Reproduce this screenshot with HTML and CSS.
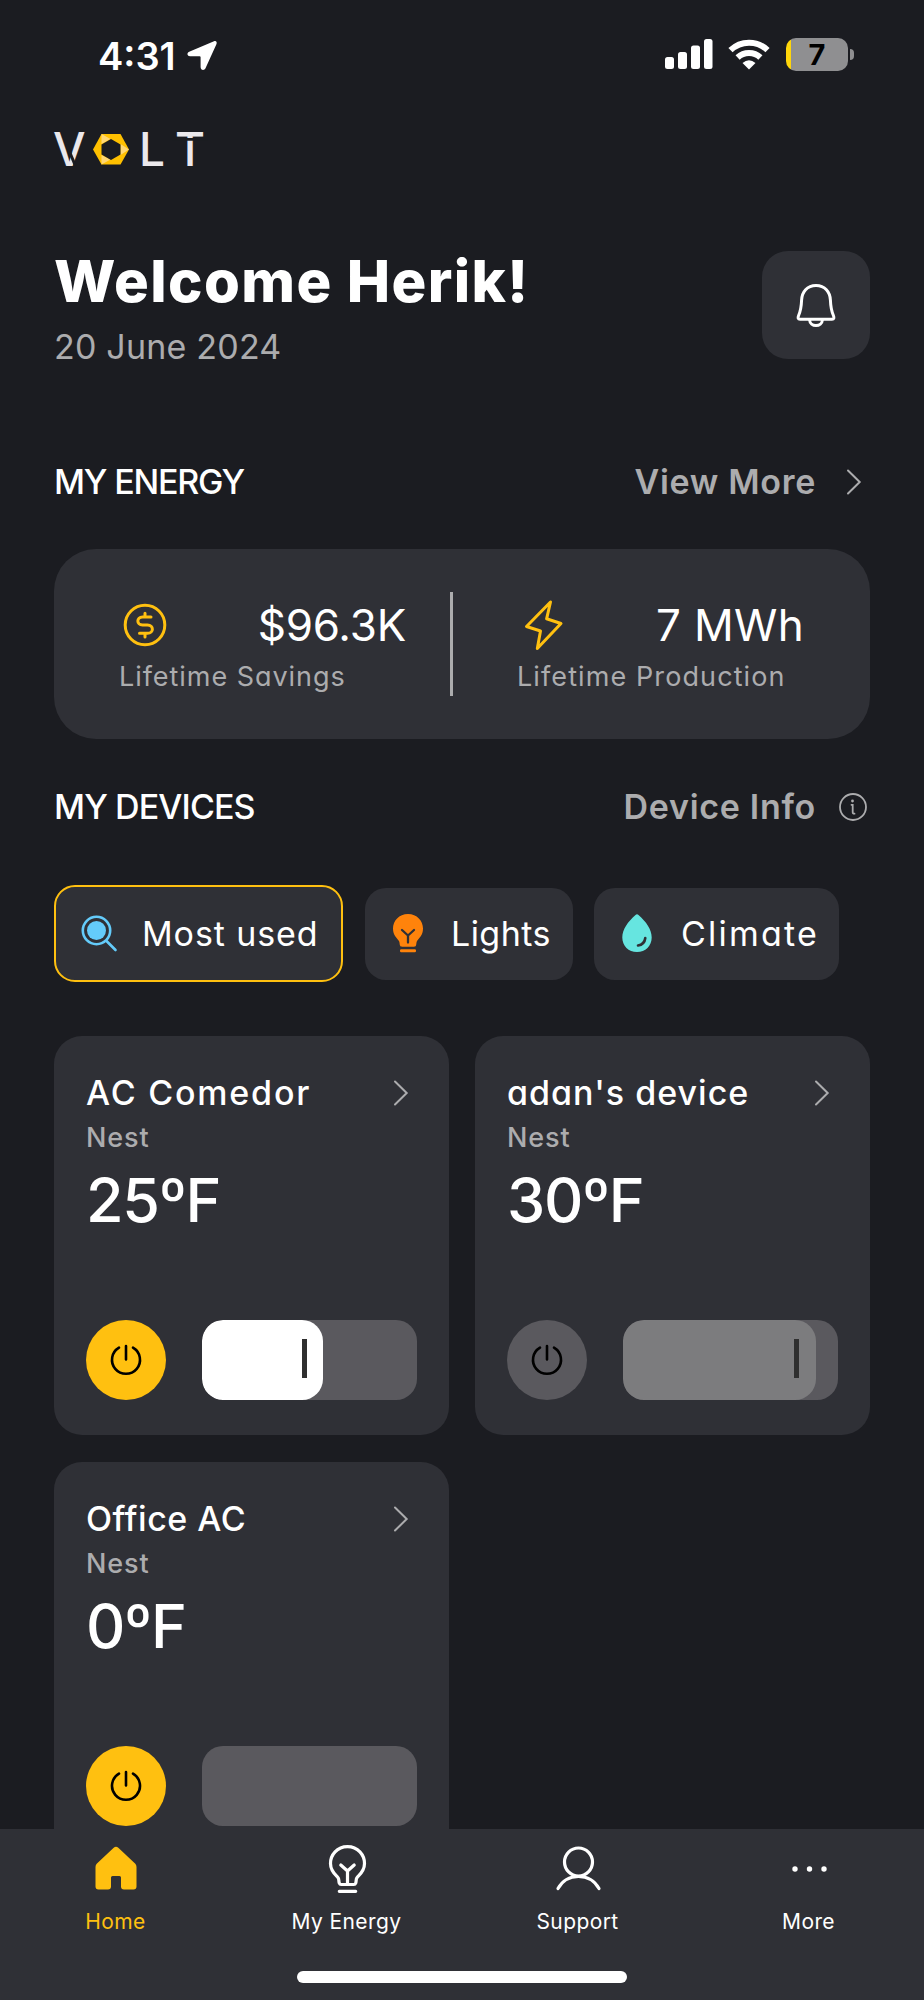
FILE: index.html
```html
<!DOCTYPE html>
<html lang="en">
<head>
<meta charset="utf-8">
<title>Volt</title>
<link rel="stylesheet" href="styles.css">
</head>
<body>
<div class="app">
  <header class="status">
    <div class="status-left">
      <span class="time">4:31</span>
      <svg class="location" viewBox="0 0 30 31"><path d="M27 1.200 2.200 11.800C-.6 13 .2 16.200 3 16.200h9.600q1 0 1 1v9.900c0 3.400 3.700 3.800 4.900 1.200L29.400 4.200C30.400 1.900 29 .4 27 1.200Z" fill="#fff"/></svg>
    </div>
    <div class="status-right">
      <svg class="signal" viewBox="0 0 48 31" fill="#fff"><rect x="0" y="18" width="9" height="12" rx="2.500"/><rect x="13" y="13" width="9" height="17" rx="2.500"/><rect x="26" y="6.500" width="9" height="23.500" rx="2.500"/><rect x="39" y="0" width="8.500" height="30" rx="2.500"/></svg>
      <svg class="wifi" viewBox="0 0 42 31"><g fill="none" stroke="#fff" stroke-width="6"><path d="M2.500 11.200a26.500 26.500 0 0 1 37 0"/><path d="M9.600 18.500a16.500 16.500 0 0 1 22.800 0"/></g><path d="M21 30.500 14.500 24q6.500-5.500 13 0Z" fill="#fff"/></svg>
      <div class="battery"><span class="battery-level">7</span></div>
      <span class="battery-cap"></span>
    </div>
  </header>

  <main class="content">
    <svg class="logo" viewBox="0 0 152 36">
      <g class="logo-text"><text x="-1" y="34">V</text><text x="85" y="34">L</text><text x="121" y="34">T</text></g>
      <path d="M12.500 12.500 21.500 34" stroke="#1b1c21" stroke-width="3"/>
      <path d="M118 7.400h36" stroke="#1b1c21" stroke-width="2.800"/>
      <path d="M47.500 2H66.500L75 17.500 66.500 32.500H47.500L39 17.500Z" fill="#ffc000"/>
      <path d="M47.500 2 56.500 7 47.500 12ZM75 17.500 66.500 23V12ZM47.500 32.500V23L56.500 27.500Z" fill="#ffd774"/>
      <path d="M57 7 66.500 12.500V22.500L57 28 47.500 22.500V12.500Z" fill="#1b1c21"/>
    </svg>

    <section class="welcome">
      <div>
        <h1 class="welcome-title">Welcome Herik!</h1>
        <p class="welcome-date">20 June 2024</p>
      </div>
      <div class="bell-button">
        <svg class="bell" viewBox="0 0 40 44" fill="none" stroke="#fff" stroke-width="3" stroke-linejoin="round"><path d="M20 2.500C11 2.500 6 9 5.600 17 5.300 25 5 27 2.600 32.500 1.600 35 2 36.300 4 36.300H36C38 36.300 38.400 35 37.400 32.500 35 27 34.700 25 34.400 17 34 9 29 2.500 20 2.500Z"/><path d="M13.500 36.500c.5 8 12.500 8 13 0"/></svg>
      </div>
    </section>

    <section class="section-head energy-head">
      <h2 class="section-title energy-title">MY ENERGY</h2>
      <a class="section-link"><span>View More</span><svg class="chevron" viewBox="0 0 14 26"><path d="M1 1.500 12.700 13 1 24.500"/></svg></a>
    </section>

    <section class="energy-card">
      <div class="metric">
        <div class="metric-row">
          <svg class="coin" viewBox="0 0 44 44" fill="none" stroke="#ffc010" stroke-width="3" stroke-linecap="round"><circle cx="22" cy="22" r="19.800"/><path d="M28 14H19.500C13.300 14 13.300 22 19.500 22H24.500C31 22 31 30.300 24.500 30.300H16.500M22 10.300V14M22 30.300V34"/></svg>
          <span class="metric-value savings-value">$96.3K</span>
        </div>
        <p class="metric-label">Lifetime Savings</p>
      </div>
      <div class="divider"></div>
      <div class="metric">
        <div class="metric-row">
          <svg class="bolt" viewBox="0 0 40 52" fill="none" stroke="#ffc010" stroke-width="3" stroke-linejoin="round"><path d="M27.500 3 3.500 27.500 17.500 32 14.300 49.500 38 24.500 23.600 19.800Z"/></svg>
          <span class="metric-value">7 MWh</span>
        </div>
        <p class="metric-label production-label">Lifetime Production</p>
      </div>
    </section>

    <section class="section-head devices-head">
      <h2 class="section-title devices-title">MY DEVICES</h2>
      <a class="section-link"><span>Device Info</span><svg class="info" viewBox="0 0 30 30" fill="none" stroke="#acacae" stroke-width="1.800" stroke-linecap="round"><circle cx="15" cy="15" r="13"/><path d="M13.500 12.800h1.200v7.400q0 1.500 1.800 1.500"/><circle cx="14.500" cy="9" r="1.400" fill="#acacae" stroke="none"/></svg></a>
    </section>

    <nav class="chips">
      <div class="chip most-used active">
        <svg class="chip-icon search" viewBox="0 0 36 38"><circle cx="15.500" cy="15.500" r="9.500" fill="#64cbfa"/><g fill="none" stroke="#64cbfa" stroke-width="2.600" stroke-linecap="round"><circle cx="15.500" cy="15.500" r="13.700"/><path d="M25.500 26 34.500 35"/></g></svg>
        <span>Most used</span>
      </div>
      <div class="chip lights">
        <svg class="chip-icon bulb" viewBox="0 0 30 39"><path d="M15 0C6 0 0 7 0 14.500c0 7 4 9.500 6 12.500.8 1.500.5 3.500 1 4.500.4.800 1 1.200 2 1.200h12c1 0 1.600-.4 2-1.200.5-1 .2-3 1-4.500 2-3 6-5.500 6-12.500C30 7 24 0 15 0Z" fill="#ff830b"/><path d="M9 16 15 21.500 21 16M15 21.500V28.500" fill="none" stroke="#2f3036" stroke-width="2.300" stroke-linecap="round"/><rect x="7" y="35.200" width="16" height="3" rx="1.200" fill="#ff830b"/></svg>
        <span>Lights</span>
      </div>
      <div class="chip climate">
        <svg class="chip-icon drop" viewBox="0 0 30 39"><path d="M13.500 1Q15-.3 16.500 1C24 7.500 29.700 15.500 29.700 23.500 29.700 32 23.500 38 15 38S.3 32 .3 23.500C.3 15.500 6 7.500 13.500 1Z" fill="#66e5e0"/><path d="M23.300 24q-.8 6.500-7.300 7.500" fill="none" stroke="#2f3036" stroke-width="2.600" stroke-linecap="round"/></svg>
        <span>Climate</span>
      </div>
    </nav>

    <section class="devices">
      <article class="device comedor">
        <div class="device-head"><h3 class="device-name">AC Comedor</h3><svg class="chevron" viewBox="0 0 14 26"><path d="M1 1.500 12.700 13 1 24.500"/></svg></div>
        <p class="device-brand">Nest</p>
        <p class="device-temp">25ºF</p>
        <div class="controls">
          <div class="power"><svg viewBox="0 0 32 32"><path d="M9 3.700a14 14 0 1 0 14 0M16 2V15.500"/></svg></div>
          <div class="slider"><div class="slider-fill" style="width:121px"><i class="handle"></i></div></div>
        </div>
      </article>
      <article class="device adan off">
        <div class="device-head"><h3 class="device-name">adan's device</h3><svg class="chevron" viewBox="0 0 14 26"><path d="M1 1.500 12.700 13 1 24.500"/></svg></div>
        <p class="device-brand">Nest</p>
        <p class="device-temp">30ºF</p>
        <div class="controls">
          <div class="power"><svg viewBox="0 0 32 32"><path d="M9 3.700a14 14 0 1 0 14 0M16 2V15.500"/></svg></div>
          <div class="slider"><div class="slider-fill" style="width:193px"><i class="handle"></i></div></div>
        </div>
      </article>
      <article class="device office">
        <div class="device-head"><h3 class="device-name">Office AC</h3><svg class="chevron" viewBox="0 0 14 26"><path d="M1 1.500 12.700 13 1 24.500"/></svg></div>
        <p class="device-brand">Nest</p>
        <p class="device-temp">0ºF</p>
        <div class="controls">
          <div class="power"><svg viewBox="0 0 32 32"><path d="M9 3.700a14 14 0 1 0 14 0M16 2V15.500"/></svg></div>
          <div class="slider"></div>
        </div>
      </article>
    </section>
  </main>

  <footer class="tabbar">
    <nav class="tabs">
      <div class="tab current">
        <svg class="tab-icon" viewBox="0 0 48 48"><path d="M21.700 2.700q2.300-2 4.600 0L43.300 18.700Q44.500 20 44.500 22V41.500q0 3-3 3H32q-3 0-3-3V32.500q0-1.500-1.500-1.500h-7q-1.500 0-1.500 1.500v9q0 3-3 3H6.500q-3 0-3-3V22q0-2 1.200-3.300Z" fill="#ffc010"/></svg>
        <span>Home</span>
      </div>
      <div class="tab">
        <svg class="tab-icon" viewBox="0 0 48 48" fill="none" stroke="#fff" stroke-width="3.200" stroke-linecap="round" stroke-linejoin="round"><path d="M24.500 1.700c-10.500 0-17 8.300-17 16.800 0 7.500 4.500 11 7.300 13.800 1.600 1.700.7 3.700 1.400 5.700.4 1.100 1 1.500 2 1.500h12.600c1 0 1.600-.4 2-1.500.7-2-.2-4 1.400-5.700C37 29.500 41.500 26 41.500 18.500 41.500 10 35 1.700 24.500 1.700Z"/><path d="M17.800 20 24.500 26 31.200 20M24.500 26V39M16.300 46.300H32.700"/></svg>
        <span>My Energy</span>
      </div>
      <div class="tab">
        <svg class="tab-icon" viewBox="0 0 48 48" fill="none" stroke="#fff" stroke-width="3.200" stroke-linecap="round"><circle cx="24.500" cy="17" r="14"/><path d="M4 43.500C13 27.500 36 27.500 45 43.500"/></svg>
        <span>Support</span>
      </div>
      <div class="tab">
        <svg class="tab-icon" viewBox="0 0 48 48" fill="#fff"><circle cx="10" cy="24" r="2.700"/><circle cx="24.500" cy="24" r="2.700"/><circle cx="39" cy="24" r="2.700"/></svg>
        <span>More</span>
      </div>
    </nav>
    <div class="home-indicator"></div>
  </footer>
</div>
</body>
</html>
```
FILE: styles.css
```css
* { box-sizing: border-box; }
body { margin: 0; background: #1b1c21; color: #fff; font-family: Inter, "Open Sans", sans-serif; font-feature-settings: "cv11"; }
h1, h2, h3, p { margin: 0; font-weight: 400; white-space: nowrap; }
svg { display: block; flex: none; overflow: visible; }
.app { width: 924px; height: 2000px; display: flex; flex-direction: column; overflow: hidden; }

.status { height: 100px; flex: none; display: flex; justify-content: space-between; align-items: flex-start; padding: 35px 70px 0 98px; }
.status-left { display: flex; align-items: flex-start; gap: 11px; }
.time { font-size: 38px; line-height: 42px; font-weight: 600; }
.location { width: 30px; height: 31px; margin-top: 5px; }
.status-right { display: flex; align-items: flex-start; }
.signal { width: 48px; height: 31px; margin: 4px 15px 0 0; }
.wifi { width: 42px; height: 31px; margin: 4px 16px 0 0; }
.battery { width: 62px; height: 33px; margin-top: 3px; border-radius: 10px; background: linear-gradient(90deg, #ffd60a 5px, #8f8f91 5px); text-align: center; }
.battery-level { display: block; color: #000; font-size: 29px; line-height: 33px; font-weight: 700; }
.battery-cap { width: 4px; height: 11px; margin: 14px 0 0 2px; border-radius: 0 6px 6px 0; background: #8f8f91; }

.content { flex: 1; min-height: 0; overflow: hidden; padding: 32px 54px 0; }
.logo { width: 152px; height: 36px; }
.logo-text { fill: #ebe8ec; font-size: 46px; font-weight: 500; }

.welcome { display: flex; justify-content: space-between; margin-top: 83px; height: 108px; }
.welcome-title { font-size: 58px; line-height: 68px; font-weight: 800; letter-spacing: 1.400px; margin-top: -4px; }
.welcome-date { font-size: 34px; line-height: 40px; font-weight: 400; letter-spacing: .2px; color: #acacae; margin-top: 12px; }
.bell-button { width: 108px; height: 108px; border-radius: 26px; background: #2f3036; display: flex; align-items: center; justify-content: center; }
.bell { width: 40px; height: 44px; }

.section-head { display: flex; justify-content: space-between; align-items: center; height: 44px; }
.energy-head { margin-top: 101px; }
.devices-head { margin-top: 46px; }
.section-title { font-size: 34px; line-height: 44px; font-weight: 450; }
.energy-title { letter-spacing: -1.200px; }
.devices-title { letter-spacing: -.9px; }
.section-link { display: flex; align-items: center; color: #acacae; font-size: 34px; line-height: 44px; font-weight: 600; letter-spacing: .7px; }
.chevron { width: 14px; height: 26px; fill: none; stroke: #acacae; stroke-width: 2; stroke-linecap: round; }
.section-link .chevron { margin: 0 9px 0 31px; }
.info { width: 30px; height: 30px; margin: 0 2px 0 22px; }

.energy-card { margin-top: 45px; height: 190px; border-radius: 42px; background: #2f3036; display: flex; padding: 43px 64px 0 65px; }
.metric { width: 287px; flex: none; }
.metric-row { display: flex; justify-content: space-between; align-items: center; height: 65px; }
.coin { width: 44px; height: 44px; margin-left: 4px; }
.bolt { width: 40px; height: 52px; margin-left: 6px; }
.metric-value { font-size: 44px; line-height: 64px; letter-spacing: .3px; }
.savings-value { letter-spacing: -.2px; }
.metric-label { font-size: 27px; line-height: 40px; font-weight: 400; letter-spacing: .95px; color: #acacae; }
.production-label { letter-spacing: 1.100px; }
.divider { width: 3px; height: 104px; margin: 0 64px 0 44px; flex: none; background: #acacae; }

.chips { display: flex; align-items: center; margin-top: 56px; height: 97px; }
.chip { display: flex; align-items: center; height: 92px; border-radius: 21px; background: #2f3036; padding-left: 28px; font-size: 34px; white-space: nowrap; }
.chip.active { height: 97px; border: 2px solid #ffc010; padding-left: 25px; }
.most-used { width: 289px; letter-spacing: .9px; }
.lights { width: 208px; margin: 0 21px 0 22px; letter-spacing: .45px; }
.climate { width: 245px; padding-left: 28px; letter-spacing: 2.200px; }
.chip-icon { margin-right: 28px; }
.search { width: 36px; height: 38px; margin-right: 25px; }
.bulb, .drop { width: 30px; height: 39px; }
.drop { margin-right: 29px; }

.devices { display: grid; grid-template-columns: 395px 395px; gap: 27px 26px; margin-top: 54px; }
.device { height: 399px; border-radius: 28px; background: #2f3036; padding: 35px 32px 0 32px; }
.device-head { display: flex; justify-content: space-between; align-items: center; height: 44px; padding-right: 9px; }
.device-name { font-size: 34px; line-height: 44px; font-weight: 500; }
.comedor .device-name { letter-spacing: 1.800px; }
.adan .device-name { letter-spacing: 1px; }
.office .device-name { letter-spacing: .5px; }
.device-brand { font-size: 27px; line-height: 36px; font-weight: 450; letter-spacing: .9px; color: #acacae; margin-top: 5px; }
.device-temp { font-size: 61px; line-height: 72px; font-weight: 500; letter-spacing: -1.300px; margin-top: 8px; }
.controls { display: flex; justify-content: space-between; margin-top: 84px; }
.power { width: 80px; height: 80px; border-radius: 50%; background: #ffc010; display: flex; align-items: center; justify-content: center; }
.power svg { width: 32px; height: 32px; fill: none; stroke: #000; stroke-width: 2.600; stroke-linecap: round; }
.slider { width: 215px; height: 80px; border-radius: 21px; background: #5a595e; overflow: hidden; }
.slider-fill { height: 80px; border-radius: 21px; background: #fff; display: flex; justify-content: flex-end; padding: 19px 16px 0 0; }
.handle { width: 5px; height: 39px; background: #2f2f2f; }
.off .power { background: #5a595e; }
.off .slider-fill { background: #7c7c7e; padding-right: 17px; }

.tabbar { flex: none; height: 171px; background: #2f3036; font-feature-settings: normal; }
.tabs { display: grid; grid-template-columns: repeat(4, 231px); padding-top: 16px; height: 142px; }
.tab { display: flex; flex-direction: column; align-items: center; font-size: 21px; line-height: 28px; letter-spacing: .4px; }
.tab span { margin-top: 15px; }
.current { color: #ffc010; }
.tab-icon { width: 48px; height: 48px; }
.home-indicator { width: 330px; height: 12px; margin: 0 auto; border-radius: 6px; background: #fff; }
```
